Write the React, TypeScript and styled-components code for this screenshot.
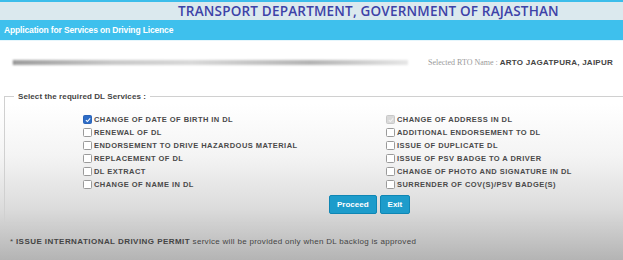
import styled, { createGlobalStyle } from "styled-components";

const GlobalStyle = createGlobalStyle`
  html, body {
    margin: 0;
    padding: 0;
  }
  body {
    min-height: 100vh;
    overflow: hidden;
    font-family: "Liberation Sans", Arial, sans-serif;
    background: linear-gradient(
      to bottom,
      #ffffff 0%,
      #ffffff 40%,
      #f4f4f4 60%,
      #dcdcdc 80%,
      #b4b4b4 100%
    );
  }
`;

const Page = styled.div`
  width: 623px;
  height: 260px;
  display: flex;
  flex-direction: column;
`;

const TopBanner = styled.div`
  height: 18px;
  border-top: 2px solid #3bbdea;
  background-color: #dbe9ee;
  display: flex;
  align-items: center;
  padding-left: 178px;
`;

const Title = styled.h1`
  margin: 0;
  font-family: "Open Sans", sans-serif;
  font-weight: 600;
  font-size: 13.5px;
  color: #3d42a8;
  letter-spacing: 0.2px;
  white-space: nowrap;
`;

const SubBar = styled.div`
  height: 20px;
  background-color: #3ec0ed;
  display: flex;
  align-items: center;
  padding-left: 4px;
  color: #ffffff;
  font-weight: 700;
  font-size: 8.5px;
  letter-spacing: -0.15px;
  border-bottom: 1px solid #e6f6fc;
`;

const InfoRow = styled.div`
  display: flex;
  align-items: center;
  height: 12px;
  margin-top: 15px;
  padding-left: 13px;
`;

const RedactedName = styled.div`
  width: 394px;
  height: 5px;
  background: linear-gradient(
    to right,
    #9c9c9c 0%,
    #c8c8c8 25%,
    #d8d8d8 45%,
    #b3b3b3 75%,
    #e6e6e6 100%
  );
  filter: blur(0.8px);
  border-left: 1px solid #777;
`;

const RtoLabel = styled.span`
  margin-left: 20px;
  font-family: "Liberation Serif", serif;
  font-size: 8px;
  color: #9a9a9a;
  white-space: nowrap;
`;

const RtoName = styled.span`
  font-family: "Liberation Sans", Arial, sans-serif;
  font-weight: 700;
  font-size: 8px;
  color: #444;
  letter-spacing: 0.25px;
`;

const ServicesBox = styled.fieldset`
  margin: 24px -20px 0 4px;
  padding: 12px 0 0 0;
  border: 1px solid #d0d0d0;
  border-right: none;
  height: 131px;
  box-sizing: border-box;
`;

const Legend = styled.legend`
  margin-left: 9px;
  padding: 0 4px;
  font-weight: 700;
  font-size: 8px;
  letter-spacing: 0.1px;
  color: #444;
`;

const ServiceGrid = styled.div`
  display: grid;
  grid-template-columns: 303px 240px;
  grid-auto-rows: 13px;
  padding-left: 78px;
`;

const ServiceItem = styled.label`
  display: flex;
  align-items: center;
  gap: 2px;
  font-weight: 700;
  font-size: 7.5px;
  letter-spacing: 0.45px;
  color: #4a4a4a;
  white-space: nowrap;
`;

const Box = styled.span<{ $state?: "checked" | "disabled" }>`
  width: 7px;
  height: 7px;
  border: 1px solid
    ${(p) =>
      p.$state === "checked" ? "#2a63b8" : p.$state === "disabled" ? "#c8c8c8" : "#9a9a9a"};
  border-radius: 1.5px;
  background: ${(p) =>
    p.$state === "checked" ? "#2d6cc6" : p.$state === "disabled" ? "#d9d9d9" : "#ffffff"};
  display: flex;
  align-items: center;
  justify-content: center;
  flex-shrink: 0;
`;

const ButtonRow = styled.div`
  display: flex;
  gap: 3px;
  padding-left: 324px;
  margin-top: 4px;
`;

const Button = styled.button`
  height: 19px;
  padding: 0 7px;
  border: 1px solid #0f86b4;
  border-radius: 2px;
  background-color: #1d9ccb;
  color: #ffffff;
  font-family: "Liberation Sans", Arial, sans-serif;
  font-weight: 700;
  font-size: 8px;
  cursor: pointer;
`;

const Footnote = styled.p`
  margin: 14px 0 0 10px;
  font-size: 8px;
  letter-spacing: 0.3px;
  color: #444;
`;

const Caps = styled.span`
  font-weight: 700;
  letter-spacing: 0.45px;
`;

type Service = { label: string; state?: "checked" | "disabled" };

const services: Service[] = [
  { label: "CHANGE OF DATE OF BIRTH IN DL", state: "checked" },
  { label: "CHANGE OF ADDRESS IN DL", state: "disabled" },
  { label: "RENEWAL OF DL" },
  { label: "ADDITIONAL ENDORSEMENT TO DL" },
  { label: "ENDORSEMENT TO DRIVE HAZARDOUS MATERIAL" },
  { label: "ISSUE OF DUPLICATE DL" },
  { label: "REPLACEMENT OF DL" },
  { label: "ISSUE OF PSV BADGE TO A DRIVER" },
  { label: "DL EXTRACT" },
  { label: "CHANGE OF PHOTO AND SIGNATURE IN DL" },
  { label: "CHANGE OF NAME IN DL" },
  { label: "SURRENDER OF COV(S)/PSV BADGE(S)" },
];

function Check({ state }: { state?: "checked" | "disabled" }) {
  return (
    <Box $state={state}>
      {state && (
        <svg width="6" height="6" viewBox="0 0 10 10">
          <path
            d="M1.5 5.2 L4 7.6 L8.6 2.2"
            fill="none"
            stroke={state === "checked" ? "#ffffff" : "#f2f2f2"}
            strokeWidth="1.8"
          />
        </svg>
      )}
    </Box>
  );
}

export default function App() {
  return (
    <>
      <GlobalStyle />
      <Page>
        <TopBanner>
          <Title>TRANSPORT DEPARTMENT, GOVERNMENT OF RAJASTHAN</Title>
        </TopBanner>
        <SubBar>Application for Services on Driving Licence</SubBar>
        <InfoRow>
          <RedactedName />
          <RtoLabel>
            Selected RTO Name : <RtoName>ARTO JAGATPURA, JAIPUR</RtoName>
          </RtoLabel>
        </InfoRow>
        <ServicesBox>
          <Legend>Select the required DL Services :</Legend>
          <ServiceGrid>
            {services.map((s) => (
              <ServiceItem key={s.label}>
                <Check state={s.state} />
                {s.label}
              </ServiceItem>
            ))}
          </ServiceGrid>
          <ButtonRow>
            <Button>Proceed</Button>
            <Button>Exit</Button>
          </ButtonRow>
        </ServicesBox>
        <Footnote>
          * <Caps>ISSUE INTERNATIONAL DRIVING PERMIT</Caps> service will be provided
          only when DL backlog is approved
        </Footnote>
      </Page>
    </>
  );
}
